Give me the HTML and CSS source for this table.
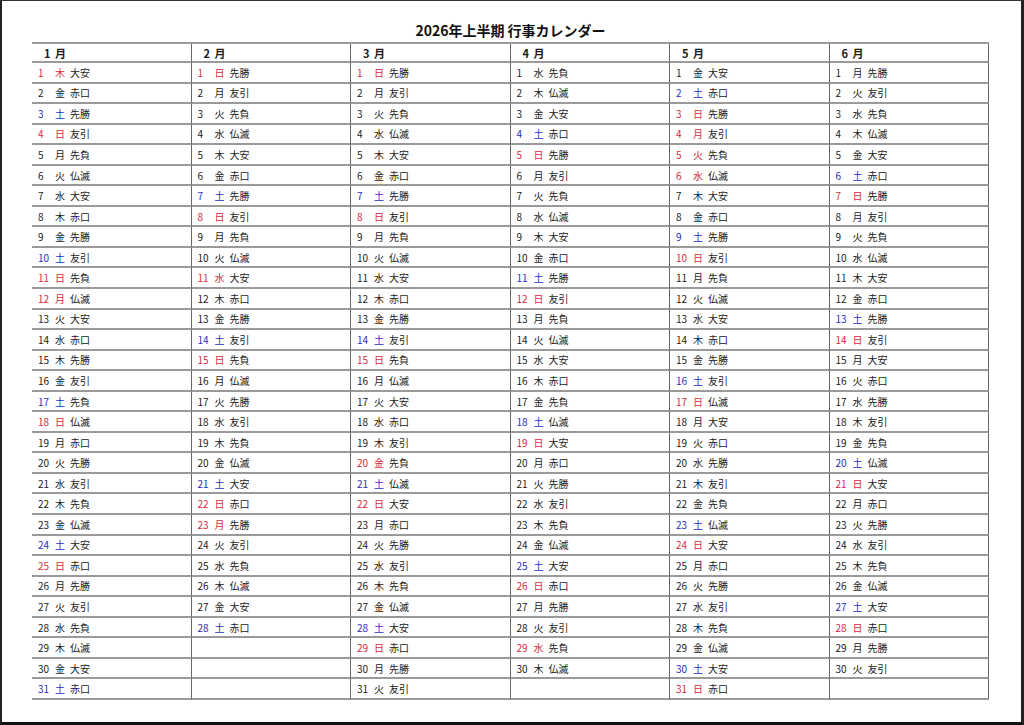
FILE: index.html
```html
<!DOCTYPE html>
<html lang="ja">
<head>
<meta charset="utf-8">
<title>2026年上半期 行事カレンダー</title>
<link rel="stylesheet" href="styles.css">
</head>
<body>
<div class="page">
<h1 class="title">2026年上半期 行事カレンダー</h1>
<div class="cal">
<div class="h">1 月</div><div class="h">2 月</div><div class="h">3 月</div><div class="h">4 月</div><div class="h">5 月</div><div class="h">6 月</div>
<div class="c r"><i>1</i><b>木</b>大安</div><div class="c r"><i>1</i><b>日</b>先勝</div><div class="c r"><i>1</i><b>日</b>先勝</div><div class="c"><i>1</i><b>水</b>先負</div><div class="c"><i>1</i><b>金</b>大安</div><div class="c"><i>1</i><b>月</b>先勝</div>
<div class="c"><i>2</i><b>金</b>赤口</div><div class="c"><i>2</i><b>月</b>友引</div><div class="c"><i>2</i><b>月</b>友引</div><div class="c"><i>2</i><b>木</b>仏滅</div><div class="c s"><i>2</i><b>土</b>赤口</div><div class="c"><i>2</i><b>火</b>友引</div>
<div class="c s"><i>3</i><b>土</b>先勝</div><div class="c"><i>3</i><b>火</b>先負</div><div class="c"><i>3</i><b>火</b>先負</div><div class="c"><i>3</i><b>金</b>大安</div><div class="c r"><i>3</i><b>日</b>先勝</div><div class="c"><i>3</i><b>水</b>先負</div>
<div class="c r"><i>4</i><b>日</b>友引</div><div class="c"><i>4</i><b>水</b>仏滅</div><div class="c"><i>4</i><b>水</b>仏滅</div><div class="c s"><i>4</i><b>土</b>赤口</div><div class="c r"><i>4</i><b>月</b>友引</div><div class="c"><i>4</i><b>木</b>仏滅</div>
<div class="c"><i>5</i><b>月</b>先負</div><div class="c"><i>5</i><b>木</b>大安</div><div class="c"><i>5</i><b>木</b>大安</div><div class="c r"><i>5</i><b>日</b>先勝</div><div class="c r"><i>5</i><b>火</b>先負</div><div class="c"><i>5</i><b>金</b>大安</div>
<div class="c"><i>6</i><b>火</b>仏滅</div><div class="c"><i>6</i><b>金</b>赤口</div><div class="c"><i>6</i><b>金</b>赤口</div><div class="c"><i>6</i><b>月</b>友引</div><div class="c r"><i>6</i><b>水</b>仏滅</div><div class="c s"><i>6</i><b>土</b>赤口</div>
<div class="c"><i>7</i><b>水</b>大安</div><div class="c s"><i>7</i><b>土</b>先勝</div><div class="c s"><i>7</i><b>土</b>先勝</div><div class="c"><i>7</i><b>火</b>先負</div><div class="c"><i>7</i><b>木</b>大安</div><div class="c r"><i>7</i><b>日</b>先勝</div>
<div class="c"><i>8</i><b>木</b>赤口</div><div class="c r"><i>8</i><b>日</b>友引</div><div class="c r"><i>8</i><b>日</b>友引</div><div class="c"><i>8</i><b>水</b>仏滅</div><div class="c"><i>8</i><b>金</b>赤口</div><div class="c"><i>8</i><b>月</b>友引</div>
<div class="c"><i>9</i><b>金</b>先勝</div><div class="c"><i>9</i><b>月</b>先負</div><div class="c"><i>9</i><b>月</b>先負</div><div class="c"><i>9</i><b>木</b>大安</div><div class="c s"><i>9</i><b>土</b>先勝</div><div class="c"><i>9</i><b>火</b>先負</div>
<div class="c s"><i>10</i><b>土</b>友引</div><div class="c"><i>10</i><b>火</b>仏滅</div><div class="c"><i>10</i><b>火</b>仏滅</div><div class="c"><i>10</i><b>金</b>赤口</div><div class="c r"><i>10</i><b>日</b>友引</div><div class="c"><i>10</i><b>水</b>仏滅</div>
<div class="c r"><i>11</i><b>日</b>先負</div><div class="c r"><i>11</i><b>水</b>大安</div><div class="c"><i>11</i><b>水</b>大安</div><div class="c s"><i>11</i><b>土</b>先勝</div><div class="c"><i>11</i><b>月</b>先負</div><div class="c"><i>11</i><b>木</b>大安</div>
<div class="c r"><i>12</i><b>月</b>仏滅</div><div class="c"><i>12</i><b>木</b>赤口</div><div class="c"><i>12</i><b>木</b>赤口</div><div class="c r"><i>12</i><b>日</b>友引</div><div class="c"><i>12</i><b>火</b>仏滅</div><div class="c"><i>12</i><b>金</b>赤口</div>
<div class="c"><i>13</i><b>火</b>大安</div><div class="c"><i>13</i><b>金</b>先勝</div><div class="c"><i>13</i><b>金</b>先勝</div><div class="c"><i>13</i><b>月</b>先負</div><div class="c"><i>13</i><b>水</b>大安</div><div class="c s"><i>13</i><b>土</b>先勝</div>
<div class="c"><i>14</i><b>水</b>赤口</div><div class="c s"><i>14</i><b>土</b>友引</div><div class="c s"><i>14</i><b>土</b>友引</div><div class="c"><i>14</i><b>火</b>仏滅</div><div class="c"><i>14</i><b>木</b>赤口</div><div class="c r"><i>14</i><b>日</b>友引</div>
<div class="c"><i>15</i><b>木</b>先勝</div><div class="c r"><i>15</i><b>日</b>先負</div><div class="c r"><i>15</i><b>日</b>先負</div><div class="c"><i>15</i><b>水</b>大安</div><div class="c"><i>15</i><b>金</b>先勝</div><div class="c"><i>15</i><b>月</b>大安</div>
<div class="c"><i>16</i><b>金</b>友引</div><div class="c"><i>16</i><b>月</b>仏滅</div><div class="c"><i>16</i><b>月</b>仏滅</div><div class="c"><i>16</i><b>木</b>赤口</div><div class="c s"><i>16</i><b>土</b>友引</div><div class="c"><i>16</i><b>火</b>赤口</div>
<div class="c s"><i>17</i><b>土</b>先負</div><div class="c"><i>17</i><b>火</b>先勝</div><div class="c"><i>17</i><b>火</b>大安</div><div class="c"><i>17</i><b>金</b>先負</div><div class="c r"><i>17</i><b>日</b>仏滅</div><div class="c"><i>17</i><b>水</b>先勝</div>
<div class="c r"><i>18</i><b>日</b>仏滅</div><div class="c"><i>18</i><b>水</b>友引</div><div class="c"><i>18</i><b>水</b>赤口</div><div class="c s"><i>18</i><b>土</b>仏滅</div><div class="c"><i>18</i><b>月</b>大安</div><div class="c"><i>18</i><b>木</b>友引</div>
<div class="c"><i>19</i><b>月</b>赤口</div><div class="c"><i>19</i><b>木</b>先負</div><div class="c"><i>19</i><b>木</b>友引</div><div class="c r"><i>19</i><b>日</b>大安</div><div class="c"><i>19</i><b>火</b>赤口</div><div class="c"><i>19</i><b>金</b>先負</div>
<div class="c"><i>20</i><b>火</b>先勝</div><div class="c"><i>20</i><b>金</b>仏滅</div><div class="c r"><i>20</i><b>金</b>先負</div><div class="c"><i>20</i><b>月</b>赤口</div><div class="c"><i>20</i><b>水</b>先勝</div><div class="c s"><i>20</i><b>土</b>仏滅</div>
<div class="c"><i>21</i><b>水</b>友引</div><div class="c s"><i>21</i><b>土</b>大安</div><div class="c s"><i>21</i><b>土</b>仏滅</div><div class="c"><i>21</i><b>火</b>先勝</div><div class="c"><i>21</i><b>木</b>友引</div><div class="c r"><i>21</i><b>日</b>大安</div>
<div class="c"><i>22</i><b>木</b>先負</div><div class="c r"><i>22</i><b>日</b>赤口</div><div class="c r"><i>22</i><b>日</b>大安</div><div class="c"><i>22</i><b>水</b>友引</div><div class="c"><i>22</i><b>金</b>先負</div><div class="c"><i>22</i><b>月</b>赤口</div>
<div class="c"><i>23</i><b>金</b>仏滅</div><div class="c r"><i>23</i><b>月</b>先勝</div><div class="c"><i>23</i><b>月</b>赤口</div><div class="c"><i>23</i><b>木</b>先負</div><div class="c s"><i>23</i><b>土</b>仏滅</div><div class="c"><i>23</i><b>火</b>先勝</div>
<div class="c s"><i>24</i><b>土</b>大安</div><div class="c"><i>24</i><b>火</b>友引</div><div class="c"><i>24</i><b>火</b>先勝</div><div class="c"><i>24</i><b>金</b>仏滅</div><div class="c r"><i>24</i><b>日</b>大安</div><div class="c"><i>24</i><b>水</b>友引</div>
<div class="c r"><i>25</i><b>日</b>赤口</div><div class="c"><i>25</i><b>水</b>先負</div><div class="c"><i>25</i><b>水</b>友引</div><div class="c s"><i>25</i><b>土</b>大安</div><div class="c"><i>25</i><b>月</b>赤口</div><div class="c"><i>25</i><b>木</b>先負</div>
<div class="c"><i>26</i><b>月</b>先勝</div><div class="c"><i>26</i><b>木</b>仏滅</div><div class="c"><i>26</i><b>木</b>先負</div><div class="c r"><i>26</i><b>日</b>赤口</div><div class="c"><i>26</i><b>火</b>先勝</div><div class="c"><i>26</i><b>金</b>仏滅</div>
<div class="c"><i>27</i><b>火</b>友引</div><div class="c"><i>27</i><b>金</b>大安</div><div class="c"><i>27</i><b>金</b>仏滅</div><div class="c"><i>27</i><b>月</b>先勝</div><div class="c"><i>27</i><b>水</b>友引</div><div class="c s"><i>27</i><b>土</b>大安</div>
<div class="c"><i>28</i><b>水</b>先負</div><div class="c s"><i>28</i><b>土</b>赤口</div><div class="c s"><i>28</i><b>土</b>大安</div><div class="c"><i>28</i><b>火</b>友引</div><div class="c"><i>28</i><b>木</b>先負</div><div class="c r"><i>28</i><b>日</b>赤口</div>
<div class="c"><i>29</i><b>木</b>仏滅</div><div class="c"></div><div class="c r"><i>29</i><b>日</b>赤口</div><div class="c r"><i>29</i><b>水</b>先負</div><div class="c"><i>29</i><b>金</b>仏滅</div><div class="c"><i>29</i><b>月</b>先勝</div>
<div class="c"><i>30</i><b>金</b>大安</div><div class="c"></div><div class="c"><i>30</i><b>月</b>先勝</div><div class="c"><i>30</i><b>木</b>仏滅</div><div class="c s"><i>30</i><b>土</b>大安</div><div class="c"><i>30</i><b>火</b>友引</div>
<div class="c s"><i>31</i><b>土</b>赤口</div><div class="c"></div><div class="c"><i>31</i><b>火</b>友引</div><div class="c"></div><div class="c r"><i>31</i><b>日</b>赤口</div><div class="c"></div>
</div>
</div>
</body>
</html>
```
FILE: styles.css
```css
html, body {
  margin: 0;
  padding: 0;
  background: #ffffff;
}
.page {
  box-sizing: border-box;
  width: 1024px;
  height: 725px;
  border-top: 1px solid #333;
  border-left: 2px solid #222;
  border-right: 3px solid #222;
  border-bottom: 3px solid #111;
  padding-left: 30px;
  font-family: "Noto Sans CJK JP", "Noto Sans", sans-serif;
  color: #1a1a1a;
}
.title {
  margin: 0;
  width: 957px;
  height: 41px;
  box-sizing: border-box;
  padding-top: 19px;
  font-size: 14px;
  line-height: 20px;
  font-weight: bold;
  text-align: center;
  color: #111;
}
.cal {
  display: grid;
  width: 957px;
  grid-template-columns: repeat(6, 159.5px);
  grid-template-rows: 19px repeat(31, 20.55px);
  border-top: 2px solid #9a9a9a;
}
.h, .c {
  box-sizing: border-box;
  border-bottom: 2px solid #9a9a9a;
  border-right: 1px solid #666;
  display: flex;
  align-items: center;
  white-space: pre;
}
.h {
  padding-left: 12px;
  font-size: 11px;
  font-weight: bold;
  word-spacing: 2px;
}
.c {
  padding-left: 6px;
  font-size: 10px;
  color: #1a1a1a;
}
.c i {
  font-style: normal;
  display: inline-block;
  width: 17px;
}
.c b {
  font-weight: normal;
  display: inline-block;
  width: 15px;
}
.c.r i, .c.r b { color: #d42b3b; }
.c.s i, .c.s b { color: #2b2bc0; }
```
